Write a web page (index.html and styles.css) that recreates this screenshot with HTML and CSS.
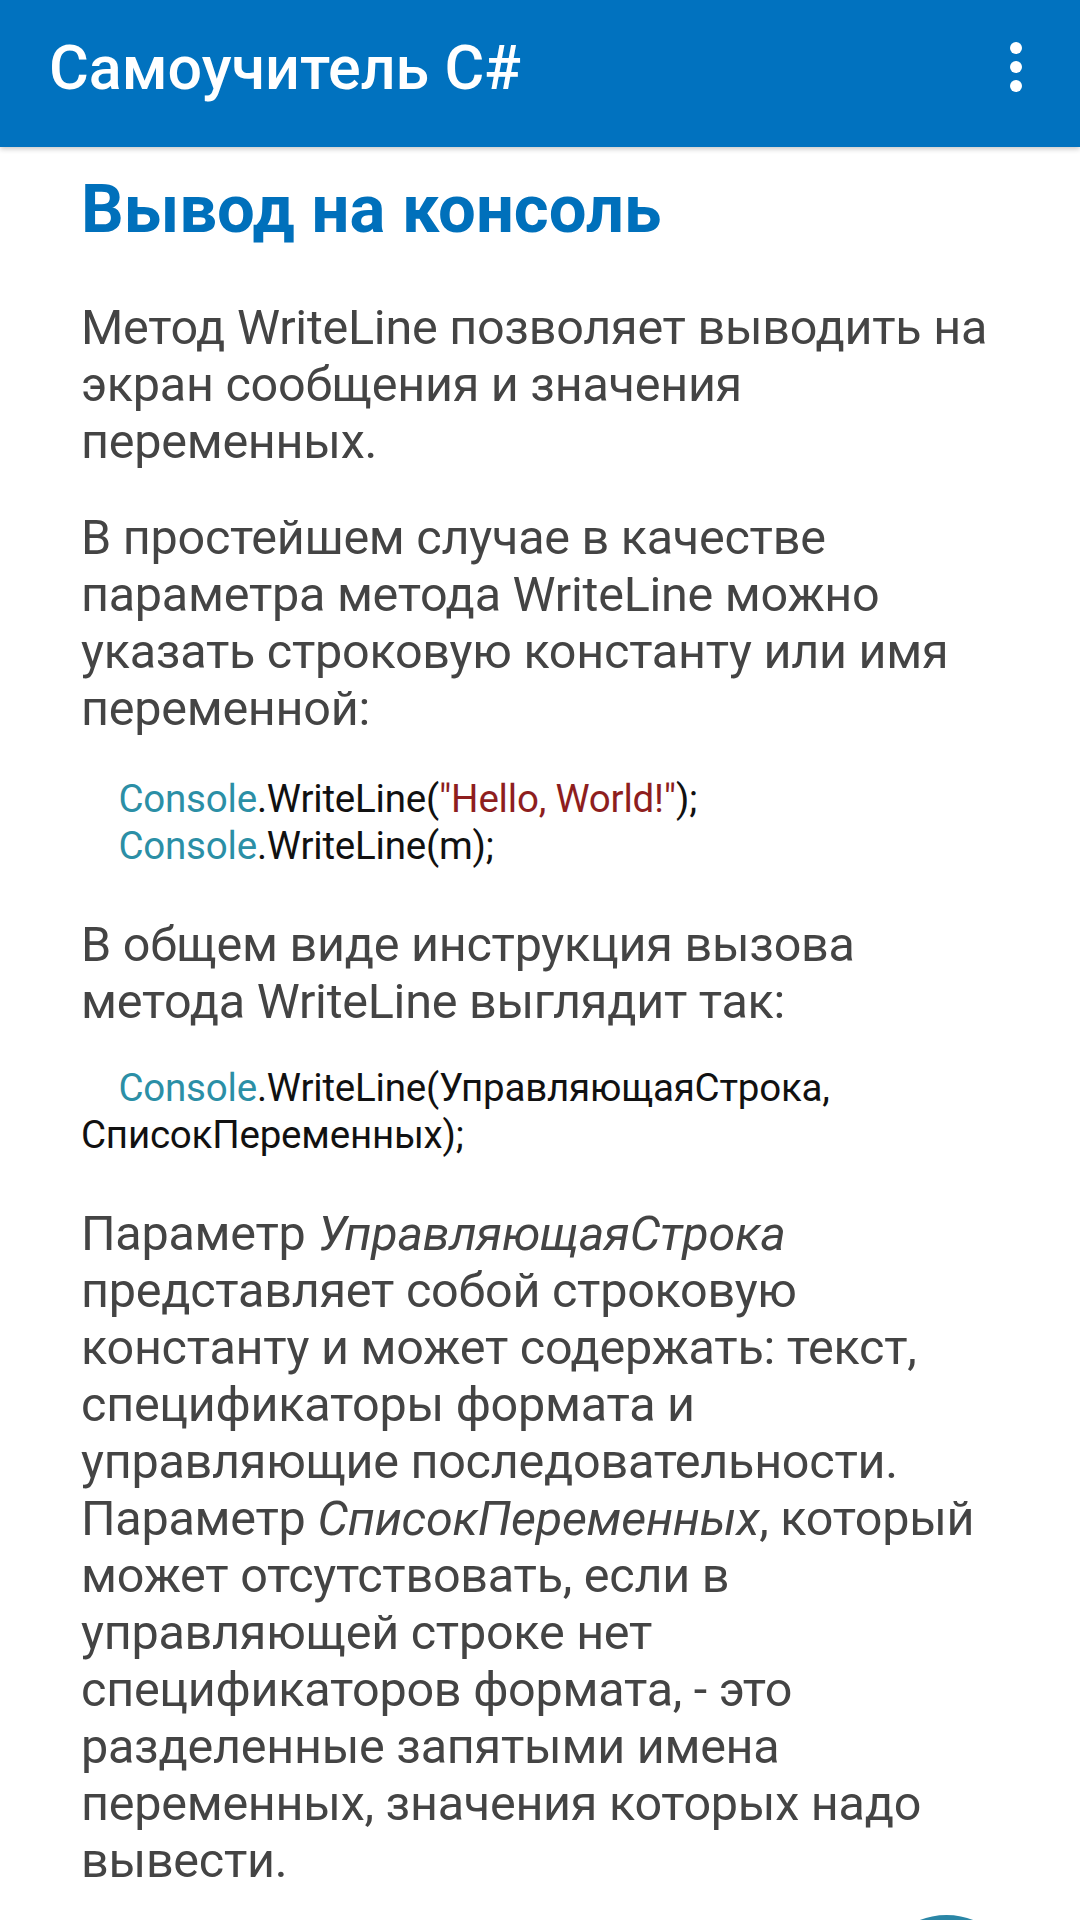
FILE: index.html
```html
<!DOCTYPE html>
<html lang="ru">
<head>
<meta charset="utf-8">
<title>Самоучитель C#</title>
<link rel="stylesheet" href="styles.css">
</head>
<body>
<header class="appbar">
  <h1 class="appbar-title">Самоучитель C#</h1>
  <div class="menu-btn" aria-label="menu">
    <span class="dot"></span><span class="dot"></span><span class="dot"></span>
  </div>
</header>
<main class="content">
  <h2 class="heading">Вывод на консоль</h2>
  <p class="para">Метод WriteLine позволяет выводить на экран сообщения и значения переменных.</p>
  <p class="para">В простейшем случае в качестве параметра метода WriteLine можно указать строковую константу или имя переменной:</p>
  <div class="code">&nbsp;&nbsp;&nbsp;&nbsp;<span class="type">Console</span>.WriteLine(<span class="str">"Hello, World!"</span>);<br>&nbsp;&nbsp;&nbsp;&nbsp;<span class="type">Console</span>.WriteLine(m);</div>
  <p class="para">В общем виде инструкция вызова метода WriteLine выглядит так:</p>
  <div class="code code-tight">&nbsp;&nbsp;&nbsp;&nbsp;<span class="type">Console</span>.WriteLine(УправляющаяСтрока, СписокПеременных);</div>
  <p class="para">Параметр <em>УправляющаяСтрока</em> представляет собой строковую константу и может содержать: текст, спецификаторы формата и управляющие последовательности. Параметр <em>СписокПеременных</em>, который может отсутствовать, если в управляющей строке нет спецификаторов формата, - это разделенные запятыми имена переменных, значения которых надо вывести.</p>
</main>
<div class="fab"></div>
</body>
</html>
```
FILE: styles.css
```css
html, body {
  margin: 0;
  padding: 0;
  background: #ffffff;
  font-family: Roboto, "Noto Sans", sans-serif;
}
body {
  width: 1080px;
  height: 1920px;
  overflow: hidden;
  position: relative;
}
.appbar {
  height: 147px;
  background: #0172bf;
  display: flex;
  align-items: center;
  justify-content: space-between;
  padding: 0 0 0 49px;
  box-sizing: border-box;
  box-shadow: 0 2px 5px rgba(0,0,0,0.22);
  position: relative;
  z-index: 2;
}
.appbar-title {
  margin: 0 0 12px 0;
  color: #ffffff;
  font-size: 61px;
  font-weight: 500;
  letter-spacing: 0;
}
.menu-btn {
  width: 134px;
  height: 147px;
  display: flex;
  flex-direction: column;
  align-items: center;
  justify-content: center;
  gap: 7px;
  padding: 0 0 14px 6px;
  box-sizing: border-box;
}
.dot {
  width: 12px;
  height: 12px;
  border-radius: 50%;
  background: #ffffff;
}
.content {
  padding: 22px 70px 0 81px;
}
.heading {
  margin: 0 0 50px 0;
  color: #0070bb;
  font-size: 67px;
  font-weight: 700;
  line-height: 80px;
  letter-spacing: 0;
}
.para {
  margin: 0 0 39px 0;
  color: #444444;
  font-size: 48.5px;
  line-height: 57px;
  letter-spacing: -0.25px;
}
.para em {
  font-style: italic;
}
.code {
  margin: 0 0 47px 0;
  color: #111111;
  font-size: 38.5px;
  line-height: 46.5px;
  letter-spacing: -0.2px;
}
.code-tight {
  margin-top: -4px;
}
.type {
  color: #2b8fa6;
}
.str {
  color: #8e1e1e;
}
.fab {
  position: absolute;
  left: 873px;
  top: 1915px;
  width: 147px;
  height: 147px;
  border-radius: 50%;
  background: #2a86a6;
}
```
